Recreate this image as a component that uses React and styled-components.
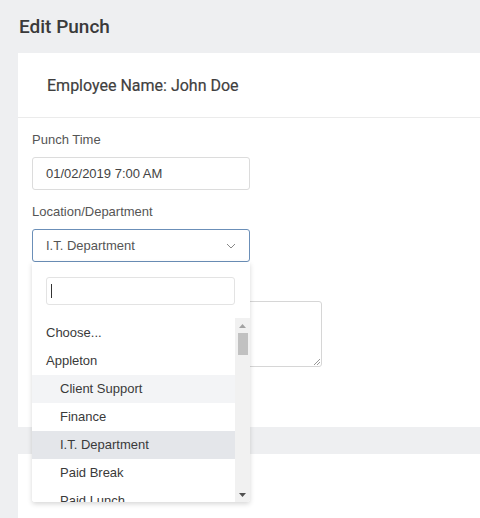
import styled, { createGlobalStyle } from "styled-components";

const GlobalStyle = createGlobalStyle`
  body {
    margin: 0;
    background: #eeeff1;
    font-family: "Liberation Sans", Arial, sans-serif;
  }
`;

const options = [
  { label: "Choose...", indent: false },
  { label: "Appleton", indent: false },
  { label: "Client Support", indent: true, hover: true },
  { label: "Finance", indent: true },
  { label: "I.T. Department", indent: true, selected: true },
  { label: "Paid Break", indent: true },
  { label: "Paid Lunch", indent: true },
];

const App = () => {
  return (
    <Page>
      <GlobalStyle />
      <Header>
        <Title>Edit Punch</Title>
      </Header>
      <Card>
        <CardHeader>Employee Name: John Doe</CardHeader>
        <CardBody>
          <Label>Punch Time</Label>
          <Input>01/02/2019 7:00 AM</Input>
          <Label>Location/Department</Label>
          <SelectWrap>
            <Select>
              <span>I.T. Department</span>
              <svg width="10" height="6" viewBox="0 0 10 6">
                <path d="M1 1 L5 5 L9 1" fill="none" stroke="#888" strokeWidth="1" />
              </svg>
            </Select>
            <Dropdown>
              <Search>
                <Caret />
              </Search>
              <ListRow>
                <List>
                  {options.map((opt, index) => (
                    <Option
                      key={index}
                      $indent={opt.indent}
                      $hover={opt.hover}
                      $selected={opt.selected}
                    >
                      {opt.label}
                    </Option>
                  ))}
                </List>
                <ScrollBar>
                  <Arrow>
                    <svg width="7" height="4" viewBox="0 0 7 4">
                      <path d="M0 4 L3.5 0 L7 4 Z" fill="#a3a3a3" />
                    </svg>
                  </Arrow>
                  <Thumb />
                  <Track />
                  <Arrow>
                    <svg width="7" height="4" viewBox="0 0 7 4">
                      <path d="M0 0 L3.5 4 L7 0 Z" fill="#505050" />
                    </svg>
                  </Arrow>
                </ScrollBar>
              </ListRow>
            </Dropdown>
          </SelectWrap>
          <Label>Note</Label>
          <TextArea>
            <svg width="7" height="7" viewBox="0 0 7 7">
              <path d="M1 7 L7 1 M4 7 L7 4" stroke="#999" strokeWidth="1" />
            </svg>
          </TextArea>
        </CardBody>
      </Card>
      <LowerCard />
    </Page>
  );
};

const Page = styled.div`
  padding-left: 18px;
  min-height: 518px;
  box-sizing: border-box;
`;

const Header = styled.div`
  height: 53px;
  display: flex;
  align-items: center;
  padding-left: 1px;
  box-sizing: border-box;
`;

const Title = styled.h1`
  margin: 0;
  font-family: Roboto, sans-serif;
  font-size: 19px;
  font-weight: 500;
  color: #3a3a3a;
`;

const Card = styled.div`
  background: #fff;
  height: 374px;
`;

const CardHeader = styled.div`
  height: 65px;
  box-sizing: border-box;
  display: flex;
  align-items: center;
  padding-left: 29px;
  border-bottom: 1px solid #ebebeb;
  font-family: Roboto, sans-serif;
  font-size: 16px;
  font-weight: 400;
  color: #3f3f3f;
  -webkit-text-stroke: 0.2px #3f3f3f;
`;

const CardBody = styled.div`
  padding: 14px 14px 0;
  display: flex;
  flex-direction: column;
  align-items: flex-start;
`;

const Label = styled.div`
  font-size: 13px;
  line-height: 16px;
  color: #555;
  margin-bottom: 9px;
`;

const Input = styled.div`
  width: 218px;
  height: 33px;
  box-sizing: border-box;
  border: 1px solid #dcdcdc;
  border-radius: 3px;
  padding-left: 13px;
  display: flex;
  align-items: center;
  font-size: 13px;
  color: #444;
  margin-bottom: 14px;
`;

const SelectWrap = styled.div`
  position: relative;
  margin-bottom: 14px;
`;

const Select = styled.div`
  width: 218px;
  height: 33px;
  box-sizing: border-box;
  border: 1px solid #6b8fb8;
  border-radius: 3px;
  padding: 0 13px 0 13px;
  display: flex;
  align-items: center;
  justify-content: space-between;
  font-size: 13px;
  color: #555;
`;

const Dropdown = styled.div`
  position: absolute;
  top: 100%;
  left: 0;
  z-index: 10;
  width: 218px;
  height: 240px;
  background: #fff;
  box-shadow: 0 2px 5px rgba(0, 0, 0, 0.16);
  border-radius: 0 0 3px 3px;
  padding-top: 15px;
  box-sizing: border-box;
  display: flex;
  flex-direction: column;
  overflow: hidden;
`;

const Search = styled.div`
  margin: 0 15px 0 14px;
  height: 28px;
  box-sizing: border-box;
  border: 1px solid #e3e3e3;
  border-radius: 3px;
  display: flex;
  align-items: center;
  padding-left: 4px;
`;

const Caret = styled.span`
  width: 1px;
  height: 14px;
  background: #333;
`;

const ListRow = styled.div`
  margin-top: 13px;
  height: 184px;
  display: flex;
`;

const List = styled.div`
  width: 203px;
  overflow: hidden;
  padding-top: 1px;
`;

const Option = styled.div`
  height: 28px;
  line-height: 28px;
  padding-left: ${(p) => (p.$indent ? "28px" : "14px")};
  font-size: 13px;
  color: #3a3a3a;
  background: ${(p) => (p.$selected ? "#e4e6ea" : p.$hover ? "#f3f4f6" : "#fff")};
  white-space: nowrap;
`;

const ScrollBar = styled.div`
  width: 15px;
  display: flex;
  flex-direction: column;
  align-items: center;
  background: #f1f1f1;
`;

const Arrow = styled.div`
  height: 15px;
  display: flex;
  align-items: center;
  justify-content: center;
`;

const Thumb = styled.div`
  width: 10px;
  height: 22px;
  background: #c1c1c1;
`;

const Track = styled.div`
  flex: 1;
`;

const TextArea = styled.div`
  width: 290px;
  height: 66px;
  box-sizing: border-box;
  border: 1px solid #d6d6d6;
  border-radius: 3px;
  display: flex;
  align-items: flex-end;
  justify-content: flex-end;
  padding: 0 1px 1px 0;
`;

const LowerCard = styled.div`
  margin-top: 27px;
  background: #fff;
  height: 64px;
`;

export default App;
